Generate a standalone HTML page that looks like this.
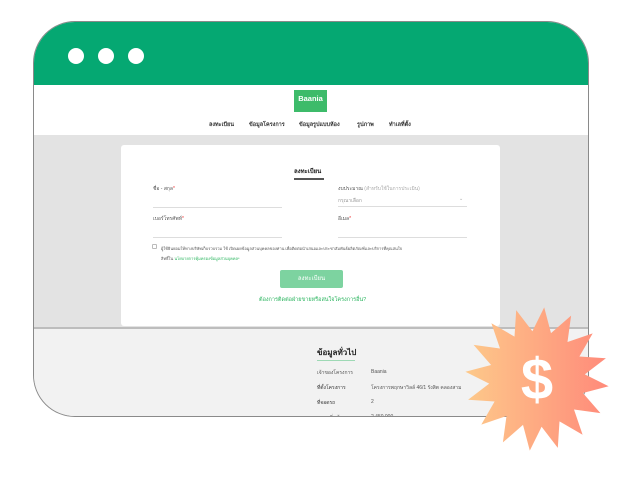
<!DOCTYPE html>
<html><head><meta charset="utf-8"><style>
*{margin:0;padding:0;box-sizing:border-box}
body{width:618px;height:480px;background:#fff;position:relative;overflow:hidden;font-family:"Liberation Sans","Noto Sans CJK SC",sans-serif}
.frame{position:absolute;left:33px;top:21px;width:556px;height:396px;border:1.5px solid #8a8a8a;border-radius:42px;overflow:hidden;background:#e3e3e3}
.top{position:absolute;left:0;top:0;right:0;height:63px;background:#05a872}
.dot{position:absolute;top:26px;width:16px;height:16px;border-radius:50%;background:#fff}
.nav{position:absolute;left:0;right:0;top:63px;height:50px;background:#fff}
.logo{position:absolute;left:260px;top:5px;width:33px;height:22px;background:#3dbb6a;color:#fff;font-size:7.5px;font-weight:bold;text-align:center;line-height:18px}
.menu{position:absolute;top:36px;font-size:5.5px;color:#333;font-weight:bold}
.card{position:absolute;left:87px;top:123px;width:379px;height:181px;background:#fff;border-radius:3px}
.t{position:absolute;font-size:5px;color:#555}
.line{position:absolute;height:1px;background:#ddd}
.foot{position:absolute;left:0;right:0;top:305px;bottom:0;background:#f2f2f2;border-top:2px solid #bdbdbd}
</style></head><body>
<div class="frame">
<div class="top"><div class="dot" style="left:34px"></div><div class="dot" style="left:64px"></div><div class="dot" style="left:94px"></div></div>
<div class="nav"><div class="logo">Baania</div>
<div class="menu" style="left:175px">ลงทะเบียน</div><div class="menu" style="left:215px">ข้อมูลโครงการ</div><div class="menu" style="left:265px">ข้อมูลรูปแบบห้อง</div><div class="menu" style="left:323px">รูปภาพ</div><div class="menu" style="left:355px">ทำเลที่ตั้ง</div></div>
<div class="card">
<div class="t" style="left:173px;top:21px;font-size:6px;color:#222;font-weight:bold">ลงทะเบียน</div>
<div class="line" style="left:173px;top:33px;width:30px;height:1.5px;background:#555"></div>
<div class="t" style="left:32px;top:40px">ชื่อ - สกุล<span style="color:#e33">*</span></div>
<div class="line" style="left:32px;top:62px;width:129px"></div>
<div class="t" style="left:217px;top:40px">งบประมาณ <span style="color:#aaa">(สำหรับใช้ในการประเมิน)</span></div>
<div class="t" style="left:217px;top:52px;color:#999">กรุณาเลือก</div>
<div class="t" style="left:338px;top:51px;color:#aaa">⌄</div>
<div class="line" style="left:217px;top:61px;width:129px"></div>
<div class="t" style="left:32px;top:70px">เบอร์โทรศัพท์<span style="color:#e33">*</span></div>
<div class="line" style="left:32px;top:92px;width:129px"></div>
<div class="t" style="left:217px;top:70px">อีเมล<span style="color:#e33">*</span></div>
<div class="line" style="left:217px;top:92px;width:129px"></div>
<div style="position:absolute;left:31px;top:99px;width:5px;height:5px;border:1px solid #bbb;border-radius:1px"></div>
<div class="t" style="left:40px;top:99px;font-size:4px;width:300px;line-height:10px">ผู้ใช้ยินยอมให้ทางบริษัทเก็บรวบรวม ใช้ เปิดเผยข้อมูลส่วนบุคคลของท่าน เพื่อติดต่อนำเสนอและประชาสัมพันธ์ผลิตภัณฑ์และบริการที่คุณสนใจ<br>สิทธิ์ใน <span style="color:#2bb55f">นโยบายการคุ้มครองข้อมูลส่วนบุคคล*</span></div>
<div style="position:absolute;left:159px;top:125px;width:63px;height:18px;background:#7dd3a0;border-radius:2px;color:#fff;font-size:6px;text-align:center;line-height:18px">ลงทะเบียน</div>
<div class="t" style="left:138px;top:151px;color:#2bb55f;font-size:5.5px">ต้องการติดต่อฝ่ายขายหรือสนใจโครงการอื่น?</div>
</div>
<div class="foot">
<div class="t" style="left:283px;top:17px;font-size:8px;color:#222;font-weight:bold">ข้อมูลทั่วไป</div>
<div class="line" style="left:283px;top:31px;width:38px;background:#9ed9b5"></div>
<div class="t" style="left:283px;top:40px">เจ้าของโครงการ</div><div class="t" style="left:337px;top:40px">Baania</div>
<div class="t" style="left:283px;top:55px;color:#333">ที่ตั้งโครงการ</div><div class="t" style="left:337px;top:55px">โครงการพฤกษาวิลล์ 46/1 รังสิต คลองสาม</div>
<div class="t" style="left:283px;top:70px;color:#333">ที่จอดรถ</div><div class="t" style="left:337px;top:70px">2</div>
<div class="t" style="left:283px;top:85px">ราคาเริ่มต้น</div><div class="t" style="left:337px;top:85px">2,450,000</div>
</div>
</div>
<svg width="618" height="480" style="position:absolute;left:0;top:0">
<defs><linearGradient id="g" x1="0" x2="1"><stop offset="0" stop-color="#fdc98a"/><stop offset="1" stop-color="#ff8a7a"/></linearGradient></defs>
<polygon id="star" fill="url(#g)"/>
<text x="537" y="399" font-family="Liberation Sans,sans-serif" font-weight="bold" font-size="58" fill="#fff" text-anchor="middle">$</text>
</svg>
<script>
var p=[],cx=537,cy=379,n=16;for(var i=0;i<2*n;i++){var r=i%2?48:72,a=Math.PI*i/n-Math.PI/2+0.1;p.push((cx+r*Math.cos(a)).toFixed(1)+","+(cy+r*Math.sin(a)).toFixed(1));}
document.getElementById('star').setAttribute('points',p.join(' '));
</script>
</body></html>
